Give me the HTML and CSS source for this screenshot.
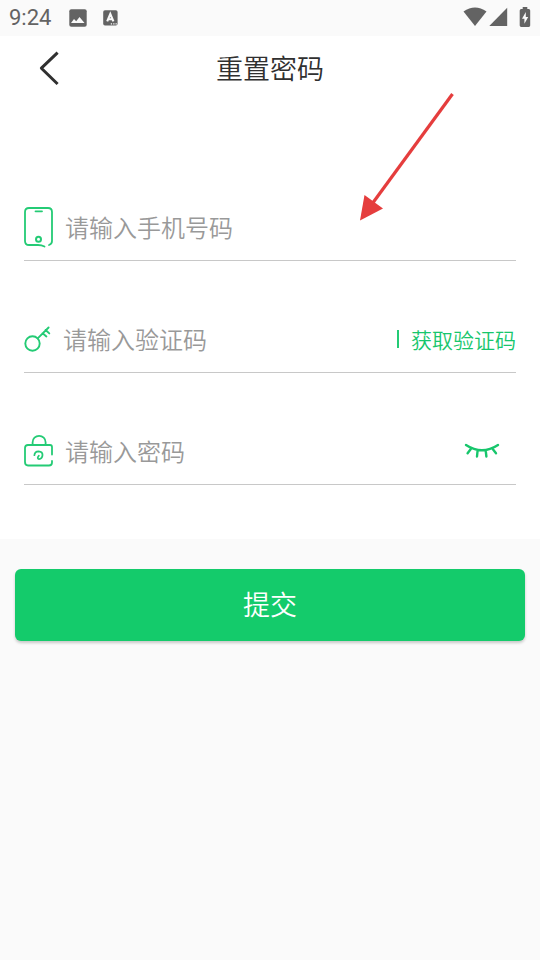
FILE: index.html
```html
<!DOCTYPE html>
<html lang="zh-CN">
<head>
<meta charset="utf-8">
<meta name="viewport" content="width=device-width, initial-scale=1">
<title>重置密码</title>
<link rel="stylesheet" href="styles.css">
</head>
<body>
<div class="status-bar">
  <div class="status-group">
    <span class="clock">9:24</span>
    <svg class="status-image" width="18" height="18" viewBox="0 0 18 18" aria-hidden="true"><rect width="17.4" height="17.4" x=".3" y=".3" rx="2" fill="#636363"/><path d="M2 14L5 10L7.2 12.3L10.5 8L15.5 14Z" fill="#fafafa"/></svg>
    <svg width="15" height="16" viewBox="0 0 15 16" aria-hidden="true"><rect width="14.4" height="15.4" x=".2" y=".2" rx="1.8" fill="#636363"/><path d="M4.2 11.4L7.3 4L10.4 11.4M5.2 9.2H9.4" fill="none" stroke="#fafafa" stroke-width="2.1"/><path d="M7.8 13.2h1.3v1.3h-1.3zM10.2 13.2h1.3v1.3h-1.3zM12.5 13.2h1.3v1.3h-1.3z" fill="#fafafa"/></svg>
  </div>
  <div class="status-group status-right">
    <svg width="24" height="20" viewBox="0 0 24 20" aria-hidden="true"><path d="M.5 4.5Q12-3.3 23.5 4.5L12 19Z" fill="#636363"/></svg>
    <svg class="signal" width="19" height="20" viewBox="0 0 19 20" aria-hidden="true"><path d="M18.2.8V19H.3Z" fill="#636363"/></svg>
    <svg width="12" height="20" viewBox="0 0 12 20" aria-hidden="true"><path d="M3.7 0h4.6v2h1.4q1.5 0 1.5 1.5v15q0 1.4-1.5 1.4H2.2Q.7 19.9.7 18.5v-15Q.7 2 2.2 2h1.5Z" fill="#636363"/><path d="M6.8 5L3 11.8h2.4v5L9.2 10H6.8Z" fill="#fafafa"/></svg>
  </div>
</div>
<main class="panel">
  <header class="title-bar">
    <button class="back" type="button" aria-label="返回"><svg width="22" height="36" viewBox="0 0 22 36" aria-hidden="true"><path d="M19.6 2.6L3.4 18.2L19.6 34" fill="none" stroke="#303030" stroke-width="3" stroke-linejoin="round"/></svg></button>
    <h1>重置密码</h1>
  </header>
  <form class="fields" id="reset">
    <div class="field">
      <label for="phone" aria-label="手机号码"><svg width="30" height="42" viewBox="0 0 30 42" aria-hidden="true"><g fill="none" stroke="#24cb75" stroke-width="1.8" stroke-linecap="round"><path d="M20.5 40.5Q17.6 39 14 39H5Q1 39 1 35V6Q1 2 5 2H24Q28 2 28 6V35Q28 38 25 39"/><path d="M11.5 5.3H18"/><circle cx="14.5" cy="33.3" r="2.5" stroke-width="2"/></g></svg></label>
      <input id="phone" type="tel" placeholder="请输入手机号码">
    </div>
    <div class="field">
      <label for="code" aria-label="验证码"><svg width="28" height="30" viewBox="0 0 28 30" aria-hidden="true"><g fill="none" stroke="#24cb75" stroke-width="1.9" stroke-linecap="round"><circle cx="8.5" cy="19.5" r="7.2"/><path d="M13.7 14.3L24.6 3.5M18.6 9.2L22.4 12.4M21.6 6L25.3 9.4"/></g></svg></label>
      <input id="code" type="text" inputmode="numeric" placeholder="请输入验证码">
      <button class="get-code" type="button">获取验证码</button>
    </div>
    <div class="field">
      <label for="password" aria-label="密码"><svg width="30" height="34" viewBox="0 0 30 34" aria-hidden="true"><g fill="none" stroke="#24cb75" stroke-width="1.8" stroke-linecap="round"><path d="M8.6 10.5V8.3A6.5 6.5 0 0 1 21.6 8.3V10.5"/><path d="M28 20.5V13Q28 11 26 11H4Q1 11 1 14V28Q1 31.5 4 31.5H25Q28 31.5 28 28.5V27"/><path d="M10.4 21.2Q10.7 17.3 14.6 17.3Q18.6 17.5 18.5 21Q18.3 24.9 15 25.1Q12.6 24.5 14.8 21.7"/></g></svg></label>
      <input id="password" type="password" placeholder="请输入密码">
      <button class="reveal" type="button" aria-label="显示密码"><svg width="36" height="18" viewBox="0 0 36 18" aria-hidden="true"><path d="M2 3Q18 13.5 34 3M7 6.8L3.6 11.2M13.6 8.5L13 14.5M21.7 8.5L22.4 14.5M28.5 6.8L32 11.2" fill="none" stroke="#17c66c" stroke-width="2.4" stroke-linecap="round"/></svg></button>
    </div>
  </form>
  <svg class="pointer" width="100" height="132" viewBox="0 0 100 132" aria-hidden="true"><path d="M96.5 5L16 115" stroke="#e53d3d" stroke-width="3.2"/><path d="M4 131.5L8.5 106L27 119.5Z" fill="#e53d3d"/></svg>
</main>
<button class="submit" type="submit" form="reset">提交</button>
</body>
</html>
```
FILE: styles.css
```css
* {
  box-sizing: border-box;
}

body {
  margin: 0;
  min-height: 100vh;
  background: #fafafa;
  color: #303030;
  font-family: "Noto Sans CJK SC", sans-serif;
  font-weight: 350;
}

svg {
  display: block;
}

button {
  border: 0;
  padding: 0;
  background: none;
  font: inherit;
}

.status-bar {
  display: flex;
  justify-content: space-between;
  align-items: center;
  height: 36px;
  padding: 0 9px;
}

.status-group {
  display: flex;
  align-items: center;
}

.status-right {
  padding-bottom: 2px;
}

.clock {
  font: 400 22px/24px Roboto, sans-serif;
  color: #636363;
}

.status-image {
  margin: 0 16px 0 18px;
}

.signal {
  margin: 0 11px 0 2px;
}

.panel {
  position: relative;
  background: #fff;
  padding-bottom: 54px;
}

.title-bar {
  display: grid;
  grid-template-columns: 64px 1fr 64px;
  align-items: center;
  height: 64px;
}

.back {
  justify-self: end;
  padding-right: 4px;
}

h1 {
  margin: 0;
  font-size: 27px;
  line-height: 40px;
  font-weight: 350;
  text-align: center;
}

.fields {
  display: grid;
  gap: 46px;
  margin: 95px 24px 0;
}

.field {
  display: flex;
  align-items: center;
  gap: 11px;
  height: 66px;
  padding-bottom: 2px;
  border-bottom: 1px solid #c8c8c8;
}

.field input {
  flex: 1;
  min-width: 0;
  height: 40px;
  border: 0;
  padding: 0;
  outline: 0;
  background: transparent;
  color: #303030;
  font: inherit;
  font-size: 24px;
}

.field input::placeholder {
  color: #999;
  opacity: 1;
}

.get-code {
  display: flex;
  align-items: center;
  gap: 12px;
  color: #17c66c;
  font-size: 21px;
  line-height: 32px;
}

.get-code::before {
  content: "";
  width: 2px;
  height: 18px;
  background: #24cb75;
}

.reveal {
  padding-right: 16px;
}

.pointer {
  position: absolute;
  top: 53px;
  right: 84px;
}

.submit {
  display: block;
  width: calc(100% - 30px);
  height: 72px;
  margin: 30px 15px;
  padding-bottom: 4px;
  border-radius: 6px;
  background: #14cb6b;
  box-shadow: 0 2px 3px #0003;
  color: #fff;
  font-size: 27px;
}
```
